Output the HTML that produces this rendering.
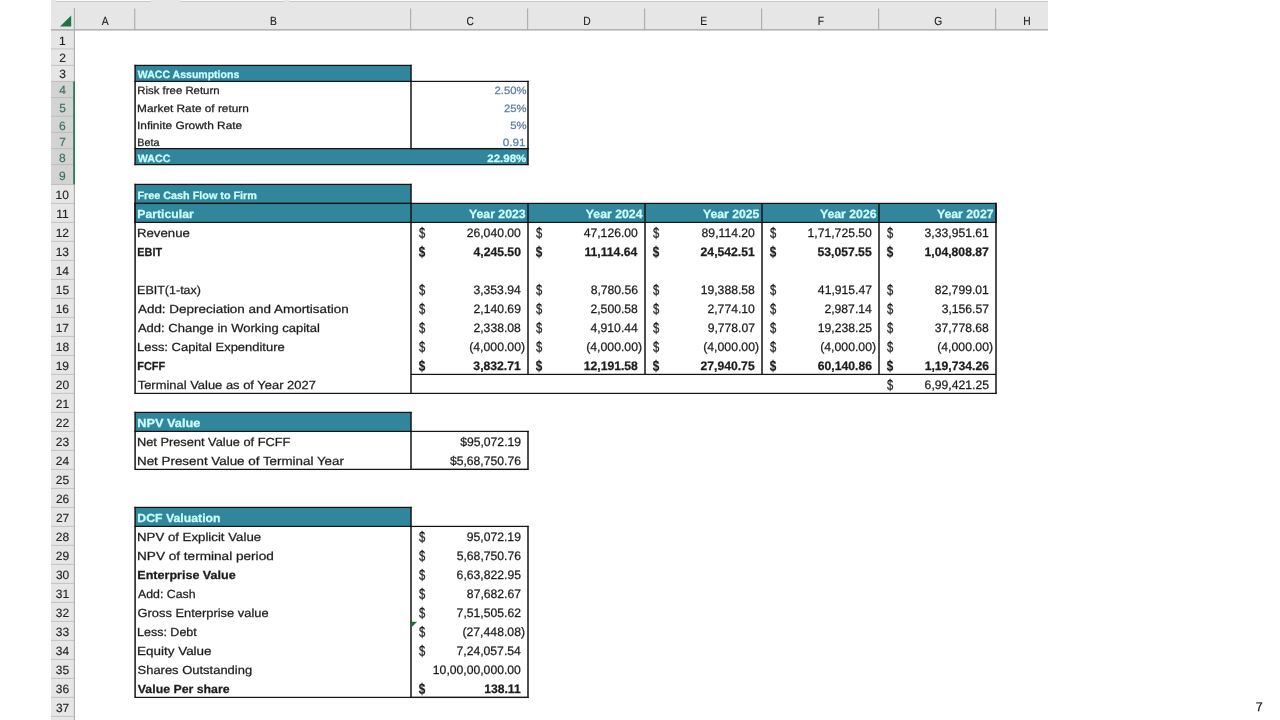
<!DOCTYPE html>
<html lang="en">
<head>
<meta charset="utf-8">
<title>DCF Valuation worksheet</title>
<style>
html,body{margin:0;padding:0;background:#fff}
body{width:1280px;height:720px;overflow:hidden;position:relative;font-family:"Liberation Sans", Arial, sans-serif;color:#1c1c1c}
#sheet{position:absolute;left:0;top:0;width:1280px;height:720px;overflow:hidden}
.r{position:absolute;display:block}
#txt{position:absolute;left:0;top:0;width:1280px;height:720px;will-change:transform}
.t{position:absolute;left:0;top:0;white-space:nowrap;line-height:16px;transform-origin:0 0;-webkit-text-stroke:0.25px currentColor;text-rendering:geometricPrecision}
.h{-webkit-text-stroke:0.15px currentColor}
</style>
</head>
<body>
<div id="sheet">
<svg class="r" style="left:0;top:0" width="1280" height="720" viewBox="0 0 1280 720" aria-hidden="true">
<rect x="51" y="0" width="997" height="30" fill="#e6e6e6"/>
<rect x="51" y="29" width="23.5" height="691" fill="#e6e6e6"/>
<rect x="55.5" y="0" width="95.5" height="1.1" fill="#fafafa"/>
<rect x="55.5" y="1.1" width="95.5" height="0.9" fill="#c4c4c4"/>
<rect x="180.5" y="0" width="103.5" height="1.1" fill="#fafafa"/>
<rect x="180.5" y="1.1" width="103.5" height="0.9" fill="#c4c4c4"/>
<rect x="289" y="0" width="759" height="1.1" fill="#fafafa"/>
<rect x="289" y="1.1" width="759" height="0.9" fill="#c4c4c4"/>
<rect x="51" y="81.4" width="23" height="103" fill="#d3d3d3"/>
<rect x="51" y="29.3" width="997" height="1.2" fill="#9f9f9f"/>
<rect x="73.85" y="8" width="1.1" height="712" fill="#adadad"/>
<rect x="51" y="48.4" width="23" height="1" fill="#c3c3c3"/>
<rect x="51" y="64.9" width="23" height="1" fill="#c3c3c3"/>
<rect x="51" y="80.9" width="22.4" height="1" fill="#bcbcbc"/>
<rect x="51" y="97.1" width="22.4" height="1" fill="#bcbcbc"/>
<rect x="51" y="115.7" width="22.4" height="1" fill="#bcbcbc"/>
<rect x="51" y="131.9" width="22.4" height="1" fill="#bcbcbc"/>
<rect x="51" y="148.1" width="22.4" height="1" fill="#bcbcbc"/>
<rect x="51" y="164.1" width="22.4" height="1" fill="#bcbcbc"/>
<rect x="51" y="183.9" width="22.4" height="1" fill="#bcbcbc"/>
<rect x="51" y="202.9" width="23" height="1" fill="#c3c3c3"/>
<rect x="51" y="221.9" width="23" height="1" fill="#c3c3c3"/>
<rect x="51" y="240.9" width="23" height="1" fill="#c3c3c3"/>
<rect x="51" y="259.9" width="23" height="1" fill="#c3c3c3"/>
<rect x="51" y="278.9" width="23" height="1" fill="#c3c3c3"/>
<rect x="51" y="297.9" width="23" height="1" fill="#c3c3c3"/>
<rect x="51" y="316.9" width="23" height="1" fill="#c3c3c3"/>
<rect x="51" y="335.9" width="23" height="1" fill="#c3c3c3"/>
<rect x="51" y="354.9" width="23" height="1" fill="#c3c3c3"/>
<rect x="51" y="373.9" width="23" height="1" fill="#c3c3c3"/>
<rect x="51" y="392.9" width="23" height="1" fill="#c3c3c3"/>
<rect x="51" y="411.9" width="23" height="1" fill="#c3c3c3"/>
<rect x="51" y="430.9" width="23" height="1" fill="#c3c3c3"/>
<rect x="51" y="449.9" width="23" height="1" fill="#c3c3c3"/>
<rect x="51" y="468.9" width="23" height="1" fill="#c3c3c3"/>
<rect x="51" y="487.9" width="23" height="1" fill="#c3c3c3"/>
<rect x="51" y="506.9" width="23" height="1" fill="#c3c3c3"/>
<rect x="51" y="525.9" width="23" height="1" fill="#c3c3c3"/>
<rect x="51" y="544.9" width="23" height="1" fill="#c3c3c3"/>
<rect x="51" y="563.9" width="23" height="1" fill="#c3c3c3"/>
<rect x="51" y="582.9" width="23" height="1" fill="#c3c3c3"/>
<rect x="51" y="601.9" width="23" height="1" fill="#c3c3c3"/>
<rect x="51" y="620.9" width="23" height="1" fill="#c3c3c3"/>
<rect x="51" y="639.9" width="23" height="1" fill="#c3c3c3"/>
<rect x="51" y="658.9" width="23" height="1" fill="#c3c3c3"/>
<rect x="51" y="677.9" width="23" height="1" fill="#c3c3c3"/>
<rect x="51" y="696.9" width="23" height="1" fill="#c3c3c3"/>
<rect x="51" y="715.9" width="23" height="1" fill="#c3c3c3"/>
<rect x="73.2" y="81.4" width="1.8" height="103" fill="#2c7a52"/>
<rect x="134.25" y="8.5" width="1" height="21" fill="#a4a4a4"/>
<rect x="410.15" y="8.5" width="1" height="21" fill="#a4a4a4"/>
<rect x="527.15" y="8.5" width="1" height="21" fill="#a4a4a4"/>
<rect x="644.15" y="8.5" width="1" height="21" fill="#a4a4a4"/>
<rect x="761.15" y="8.5" width="1" height="21" fill="#a4a4a4"/>
<rect x="878.15" y="8.5" width="1" height="21" fill="#a4a4a4"/>
<rect x="995.15" y="8.5" width="1" height="21" fill="#a4a4a4"/>
<path d="M71.2 15.6 L71.2 26.6 L60 26.6 Z" fill="#217346"/>
<rect x="135.1" y="65.4" width="275.9" height="16" fill="#31869b"/>
<rect x="135.1" y="148.6" width="392.9" height="16" fill="#31869b"/>
<rect x="135.1" y="184.4" width="275.9" height="19" fill="#31869b"/>
<rect x="135.1" y="203.4" width="860.9" height="19" fill="#31869b"/>
<rect x="135.1" y="412.4" width="275.9" height="19" fill="#31869b"/>
<rect x="135.1" y="507.4" width="275.9" height="19" fill="#31869b"/>
<rect x="134.5" y="64.775" width="277.1" height="1.25" fill="#161616"/>
<rect x="134.5" y="80.775" width="277.1" height="1.25" fill="#161616"/>
<rect x="134.35" y="64.8" width="1.5" height="17.2" fill="#161616"/>
<rect x="410.25" y="64.8" width="1.5" height="17.2" fill="#161616"/>
<rect x="134.5" y="147.975" width="394.1" height="1.25" fill="#161616"/>
<rect x="134.5" y="163.975" width="394.1" height="1.25" fill="#161616"/>
<rect x="134.35" y="148" width="1.5" height="17.2" fill="#161616"/>
<rect x="527.25" y="148" width="1.5" height="17.2" fill="#161616"/>
<rect x="410.4" y="80.775" width="118.2" height="1.25" fill="#161616"/>
<rect x="410.4" y="147.975" width="118.2" height="1.25" fill="#161616"/>
<rect x="410.25" y="80.8" width="1.5" height="68.4" fill="#161616"/>
<rect x="527.25" y="80.8" width="1.5" height="68.4" fill="#161616"/>
<rect x="134.35" y="81.4" width="1.5" height="67.2" fill="#161616"/>
<rect x="134.5" y="183.775" width="277.1" height="1.25" fill="#161616"/>
<rect x="134.5" y="202.775" width="277.1" height="1.25" fill="#161616"/>
<rect x="134.35" y="183.8" width="1.5" height="20.2" fill="#161616"/>
<rect x="410.25" y="183.8" width="1.5" height="20.2" fill="#161616"/>
<rect x="134.5" y="202.775" width="862.1" height="1.25" fill="#161616"/>
<rect x="134.5" y="221.775" width="862.1" height="1.25" fill="#161616"/>
<rect x="134.35" y="202.8" width="1.5" height="20.2" fill="#161616"/>
<rect x="995.25" y="202.8" width="1.5" height="20.2" fill="#161616"/>
<rect x="134.35" y="203.4" width="1.5" height="190.6" fill="#161616"/>
<rect x="410.25" y="203.4" width="1.5" height="190.6" fill="#161616"/>
<rect x="527.25" y="203.4" width="1.5" height="171.6" fill="#161616"/>
<rect x="644.25" y="203.4" width="1.5" height="171.6" fill="#161616"/>
<rect x="761.25" y="203.4" width="1.5" height="171.6" fill="#161616"/>
<rect x="878.25" y="203.4" width="1.5" height="171.6" fill="#161616"/>
<rect x="995.25" y="203.4" width="1.5" height="190.6" fill="#161616"/>
<rect x="411" y="373.775" width="585" height="1.25" fill="#161616"/>
<rect x="134.5" y="392.775" width="862.1" height="1.25" fill="#161616"/>
<rect x="134.5" y="411.775" width="277.1" height="1.25" fill="#161616"/>
<rect x="134.5" y="430.775" width="277.1" height="1.25" fill="#161616"/>
<rect x="134.35" y="411.8" width="1.5" height="20.2" fill="#161616"/>
<rect x="410.25" y="411.8" width="1.5" height="20.2" fill="#161616"/>
<rect x="410.4" y="430.775" width="118.2" height="1.25" fill="#161616"/>
<rect x="410.4" y="468.775" width="118.2" height="1.25" fill="#161616"/>
<rect x="410.25" y="430.8" width="1.5" height="39.2" fill="#161616"/>
<rect x="527.25" y="430.8" width="1.5" height="39.2" fill="#161616"/>
<rect x="134.35" y="431.4" width="1.5" height="38.6" fill="#161616"/>
<rect x="135.1" y="468.775" width="392.9" height="1.25" fill="#161616"/>
<rect x="134.5" y="506.775" width="277.1" height="1.25" fill="#161616"/>
<rect x="134.5" y="525.775" width="277.1" height="1.25" fill="#161616"/>
<rect x="134.35" y="506.8" width="1.5" height="20.2" fill="#161616"/>
<rect x="410.25" y="506.8" width="1.5" height="20.2" fill="#161616"/>
<rect x="410.4" y="525.775" width="118.2" height="1.25" fill="#161616"/>
<rect x="410.4" y="696.775" width="118.2" height="1.25" fill="#161616"/>
<rect x="410.25" y="525.8" width="1.5" height="172.2" fill="#161616"/>
<rect x="527.25" y="525.8" width="1.5" height="172.2" fill="#161616"/>
<rect x="134.35" y="526.4" width="1.5" height="171.6" fill="#161616"/>
<rect x="135.1" y="696.775" width="392.9" height="1.25" fill="#161616"/>
<path d="M410.5 621.7 L417.1 621.7 L410.5 628.3 Z" fill="#1f6b3c"/>
</svg>
<div id="txt">
<span class="t" style="font-size:10.6px;font-weight:700;color:#ccffff;transform:translate(137.85px,67px) scaleX(0.9942);">WACC Assumptions</span>
<span class="t" style="font-size:10.6px;transform:translate(137.29px,83px) scaleX(1.0751);">Risk free Return</span>
<span class="t" style="font-size:10.6px;transform:translate(137.10px,101px) scaleX(1.1162);">Market Rate of return</span>
<span class="t" style="font-size:10.6px;transform:translate(136.99px,118px) scaleX(1.1239);">Infinite Growth Rate</span>
<span class="t" style="font-size:10.6px;transform:translate(137.21px,135px) scaleX(1.0171);">Beta</span>
<span class="t" style="font-size:10.6px;font-weight:700;color:#ccffff;transform:translate(137.85px,151px) scaleX(1.0073);">WACC</span>
<span class="t" style="font-size:10.6px;font-weight:700;color:#ccffff;transform:translate(137.42px,188px) scaleX(1.0200);">Free Cash Flow to Firm</span>
<span class="t" style="font-size:11.7px;font-weight:700;color:#ccffff;transform:translate(137.35px,207px) scaleX(1.0456);">Particular</span>
<span class="t" style="font-size:11.7px;transform:translate(136.98px,226px) scaleX(1.1303);">Revenue</span>
<span class="t" style="font-size:11.7px;font-weight:700;transform:translate(137.36px,245px) scaleX(0.9262);">EBIT</span>
<span class="t" style="font-size:11.7px;transform:translate(137.07px,283px) scaleX(1.0698);">EBIT(1-tax)</span>
<span class="t" style="font-size:11.7px;transform:translate(137.95px,302px) scaleX(1.1504);">Add: Depreciation and Amortisation</span>
<span class="t" style="font-size:11.7px;transform:translate(137.93px,321px) scaleX(1.1125);">Add: Change in Working capital</span>
<span class="t" style="font-size:11.7px;transform:translate(136.99px,340px) scaleX(1.1089);">Less: Capital Expenditure</span>
<span class="t" style="font-size:11.7px;font-weight:700;transform:translate(137.34px,359px) scaleX(0.9329);">FCFF</span>
<span class="t" style="font-size:11.7px;transform:translate(137.66px,378px) scaleX(1.1072);">Terminal Value as of Year 2027</span>
<span class="t" style="font-size:11.7px;font-weight:700;color:#ccffff;transform:translate(137.31px,416px) scaleX(1.0895);">NPV Value</span>
<span class="t" style="font-size:11.7px;transform:translate(136.99px,435px) scaleX(1.0947);">Net Present Value of FCFF</span>
<span class="t" style="font-size:11.7px;transform:translate(136.99px,454px) scaleX(1.1444);">Net Present Value of Terminal Year</span>
<span class="t" style="font-size:11.7px;font-weight:700;color:#ccffff;transform:translate(137.35px,511px) scaleX(1.0502);">DCF Valuation</span>
<span class="t" style="font-size:11.7px;transform:translate(136.99px,530px) scaleX(1.1328);">NPV of Explicit Value</span>
<span class="t" style="font-size:11.7px;transform:translate(136.99px,549px) scaleX(1.1632);">NPV of terminal period</span>
<span class="t" style="font-size:11.7px;font-weight:700;transform:translate(137.32px,568px) scaleX(1.0736);">Enterprise Value</span>
<span class="t" style="font-size:11.7px;transform:translate(137.99px,587px) scaleX(1.0557);">Add: Cash</span>
<span class="t" style="font-size:11.7px;transform:translate(137.50px,606px) scaleX(1.1028);">Gross Enterprise value</span>
<span class="t" style="font-size:11.7px;transform:translate(137.08px,625px) scaleX(1.0677);">Less: Debt</span>
<span class="t" style="font-size:11.7px;transform:translate(136.99px,644px) scaleX(1.1519);">Equity Value</span>
<span class="t" style="font-size:11.7px;transform:translate(137.53px,663px) scaleX(1.1092);">Shares Outstanding</span>
<span class="t" style="font-size:11.7px;font-weight:700;transform:translate(137.83px,682px) scaleX(1.0533);">Value Per share</span>
<span class="t" style="font-size:10.6px;color:#5c7da3;transform:translate(494.55px,83px) scaleX(1.0636);">2.50%</span>
<span class="t" style="font-size:10.6px;color:#5c7da3;transform:translate(503.97px,101px) scaleX(1.0646);">25%</span>
<span class="t" style="font-size:10.6px;color:#5c7da3;transform:translate(510.13px,118px) scaleX(1.0711);">5%</span>
<span class="t" style="font-size:10.6px;color:#5c7da3;transform:translate(502.81px,135px) scaleX(1.1057);">0.91</span>
<span class="t" style="font-size:10.6px;font-weight:700;color:#ccffff;transform:translate(487.29px,151px) scaleX(1.0854);">22.98%</span>
<span class="t" style="font-size:12px;font-weight:700;color:#ccffff;transform:translate(468.99px,206px) scaleX(1.0222);">Year 2023</span>
<span class="t" style="font-size:12px;font-weight:700;color:#ccffff;transform:translate(585.84px,206px) scaleX(1.0221);">Year 2024</span>
<span class="t" style="font-size:12px;font-weight:700;color:#ccffff;transform:translate(702.99px,206px) scaleX(1.0177);">Year 2025</span>
<span class="t" style="font-size:12px;font-weight:700;color:#ccffff;transform:translate(819.98px,206px) scaleX(1.0218);">Year 2026</span>
<span class="t" style="font-size:12px;font-weight:700;color:#ccffff;transform:translate(936.97px,206px) scaleX(1.0222);">Year 2027</span>
<span class="t" style="font-size:15px;transform:translate(418.90px,226px) scaleX(0.7522);">$</span>
<span class="t" style="font-size:12.3px;transform:translate(466.69px,225px) scaleX(0.9900);">26,040.00</span>
<span class="t" style="font-size:15px;transform:translate(535.90px,226px) scaleX(0.7522);">$</span>
<span class="t" style="font-size:12.3px;transform:translate(583.69px,225px) scaleX(0.9900);">47,126.00</span>
<span class="t" style="font-size:15px;transform:translate(652.90px,226px) scaleX(0.7522);">$</span>
<span class="t" style="font-size:12.3px;transform:translate(701.60px,225px) scaleX(0.9900);">89,114.20</span>
<span class="t" style="font-size:15px;transform:translate(769.90px,226px) scaleX(0.7522);">$</span>
<span class="t" style="font-size:12.3px;transform:translate(807.54px,225px) scaleX(0.9900);">1,71,725.50</span>
<span class="t" style="font-size:15px;transform:translate(886.90px,226px) scaleX(0.7522);">$</span>
<span class="t" style="font-size:12.3px;transform:translate(924.55px,225px) scaleX(0.9900);">3,33,951.61</span>
<span class="t" style="font-size:15px;font-weight:700;transform:translate(418.64px,245px) scaleX(0.7804);">$</span>
<span class="t" style="font-size:12.3px;font-weight:700;transform:translate(473.51px,244px) scaleX(0.9900);">4,245.50</span>
<span class="t" style="font-size:15px;font-weight:700;transform:translate(535.64px,245px) scaleX(0.7804);">$</span>
<span class="t" style="font-size:12.3px;font-weight:700;transform:translate(584.49px,244px) scaleX(0.9900);">11,114.64</span>
<span class="t" style="font-size:15px;font-weight:700;transform:translate(652.64px,245px) scaleX(0.7804);">$</span>
<span class="t" style="font-size:12.3px;font-weight:700;transform:translate(700.59px,244px) scaleX(0.9900);">24,542.51</span>
<span class="t" style="font-size:15px;font-weight:700;transform:translate(769.64px,245px) scaleX(0.7804);">$</span>
<span class="t" style="font-size:12.3px;font-weight:700;transform:translate(817.49px,244px) scaleX(0.9900);">53,057.55</span>
<span class="t" style="font-size:15px;font-weight:700;transform:translate(886.64px,245px) scaleX(0.7804);">$</span>
<span class="t" style="font-size:12.3px;font-weight:700;transform:translate(924.52px,244px) scaleX(0.9900);">1,04,808.87</span>
<span class="t" style="font-size:15px;transform:translate(418.90px,283px) scaleX(0.7522);">$</span>
<span class="t" style="font-size:12.3px;transform:translate(473.42px,282px) scaleX(0.9900);">3,353.94</span>
<span class="t" style="font-size:15px;transform:translate(535.90px,283px) scaleX(0.7522);">$</span>
<span class="t" style="font-size:12.3px;transform:translate(590.63px,282px) scaleX(0.9900);">8,780.56</span>
<span class="t" style="font-size:15px;transform:translate(652.90px,283px) scaleX(0.7522);">$</span>
<span class="t" style="font-size:12.3px;transform:translate(700.70px,282px) scaleX(0.9900);">19,388.58</span>
<span class="t" style="font-size:15px;transform:translate(769.90px,283px) scaleX(0.7522);">$</span>
<span class="t" style="font-size:12.3px;transform:translate(817.86px,282px) scaleX(0.9900);">41,915.47</span>
<span class="t" style="font-size:15px;transform:translate(886.90px,283px) scaleX(0.7522);">$</span>
<span class="t" style="font-size:12.3px;transform:translate(934.70px,282px) scaleX(0.9900);">82,799.01</span>
<span class="t" style="font-size:15px;transform:translate(418.90px,302px) scaleX(0.7522);">$</span>
<span class="t" style="font-size:12.3px;transform:translate(473.51px,301px) scaleX(0.9900);">2,140.69</span>
<span class="t" style="font-size:15px;transform:translate(535.90px,302px) scaleX(0.7522);">$</span>
<span class="t" style="font-size:12.3px;transform:translate(590.47px,301px) scaleX(0.9900);">2,500.58</span>
<span class="t" style="font-size:15px;transform:translate(652.90px,302px) scaleX(0.7522);">$</span>
<span class="t" style="font-size:12.3px;transform:translate(707.46px,301px) scaleX(0.9900);">2,774.10</span>
<span class="t" style="font-size:15px;transform:translate(769.90px,302px) scaleX(0.7522);">$</span>
<span class="t" style="font-size:12.3px;transform:translate(824.42px,301px) scaleX(0.9900);">2,987.14</span>
<span class="t" style="font-size:15px;transform:translate(886.90px,302px) scaleX(0.7522);">$</span>
<span class="t" style="font-size:12.3px;transform:translate(941.64px,301px) scaleX(0.9900);">3,156.57</span>
<span class="t" style="font-size:15px;transform:translate(418.90px,321px) scaleX(0.7522);">$</span>
<span class="t" style="font-size:12.3px;transform:translate(473.47px,320px) scaleX(0.9900);">2,338.08</span>
<span class="t" style="font-size:15px;transform:translate(535.90px,321px) scaleX(0.7522);">$</span>
<span class="t" style="font-size:12.3px;transform:translate(590.42px,320px) scaleX(0.9900);">4,910.44</span>
<span class="t" style="font-size:15px;transform:translate(652.90px,321px) scaleX(0.7522);">$</span>
<span class="t" style="font-size:12.3px;transform:translate(707.64px,320px) scaleX(0.9900);">9,778.07</span>
<span class="t" style="font-size:15px;transform:translate(769.90px,321px) scaleX(0.7522);">$</span>
<span class="t" style="font-size:12.3px;transform:translate(817.77px,320px) scaleX(0.9900);">19,238.25</span>
<span class="t" style="font-size:15px;transform:translate(886.90px,321px) scaleX(0.7522);">$</span>
<span class="t" style="font-size:12.3px;transform:translate(934.70px,320px) scaleX(0.9900);">37,778.68</span>
<span class="t" style="font-size:15px;transform:translate(418.90px,340px) scaleX(0.7522);">$</span>
<span class="t" style="font-size:12.3px;transform:translate(469.24px,339px) scaleX(0.9950);">(4,000.00)</span>
<span class="t" style="font-size:15px;transform:translate(535.90px,340px) scaleX(0.7522);">$</span>
<span class="t" style="font-size:12.3px;transform:translate(586.24px,339px) scaleX(0.9950);">(4,000.00)</span>
<span class="t" style="font-size:15px;transform:translate(652.90px,340px) scaleX(0.7522);">$</span>
<span class="t" style="font-size:12.3px;transform:translate(703.24px,339px) scaleX(0.9950);">(4,000.00)</span>
<span class="t" style="font-size:15px;transform:translate(769.90px,340px) scaleX(0.7522);">$</span>
<span class="t" style="font-size:12.3px;transform:translate(820.24px,339px) scaleX(0.9950);">(4,000.00)</span>
<span class="t" style="font-size:15px;transform:translate(886.90px,340px) scaleX(0.7522);">$</span>
<span class="t" style="font-size:12.3px;transform:translate(937.24px,339px) scaleX(0.9950);">(4,000.00)</span>
<span class="t" style="font-size:15px;font-weight:700;transform:translate(418.64px,359px) scaleX(0.7804);">$</span>
<span class="t" style="font-size:12.3px;font-weight:700;transform:translate(473.36px,358px) scaleX(0.9900);">3,832.71</span>
<span class="t" style="font-size:15px;font-weight:700;transform:translate(535.64px,359px) scaleX(0.7804);">$</span>
<span class="t" style="font-size:12.3px;font-weight:700;transform:translate(583.73px,358px) scaleX(0.9900);">12,191.58</span>
<span class="t" style="font-size:15px;font-weight:700;transform:translate(652.64px,359px) scaleX(0.7804);">$</span>
<span class="t" style="font-size:12.3px;font-weight:700;transform:translate(700.49px,358px) scaleX(0.9900);">27,940.75</span>
<span class="t" style="font-size:15px;font-weight:700;transform:translate(769.64px,359px) scaleX(0.7804);">$</span>
<span class="t" style="font-size:12.3px;font-weight:700;transform:translate(817.81px,358px) scaleX(0.9900);">60,140.86</span>
<span class="t" style="font-size:15px;font-weight:700;transform:translate(886.64px,359px) scaleX(0.7804);">$</span>
<span class="t" style="font-size:12.3px;font-weight:700;transform:translate(924.66px,358px) scaleX(0.9900);">1,19,734.26</span>
<span class="t" style="font-size:15px;transform:translate(886.90px,378px) scaleX(0.7522);">$</span>
<span class="t" style="font-size:12.3px;transform:translate(924.61px,377px) scaleX(0.9900);">6,99,421.25</span>
<span class="t" style="font-size:12.3px;transform:translate(460.13px,434px) scaleX(0.9900);">$95,072.19</span>
<span class="t" style="font-size:12.3px;transform:translate(449.90px,453px) scaleX(0.9900);">$5,68,750.76</span>
<span class="t" style="font-size:15px;transform:translate(418.90px,530px) scaleX(0.7522);">$</span>
<span class="t" style="font-size:12.3px;transform:translate(466.74px,529px) scaleX(0.9900);">95,072.19</span>
<span class="t" style="font-size:15px;transform:translate(418.90px,549px) scaleX(0.7522);">$</span>
<span class="t" style="font-size:12.3px;transform:translate(456.70px,548px) scaleX(0.9900);">5,68,750.76</span>
<span class="t" style="font-size:15px;transform:translate(418.90px,568px) scaleX(0.7522);">$</span>
<span class="t" style="font-size:12.3px;transform:translate(456.61px,567px) scaleX(0.9900);">6,63,822.95</span>
<span class="t" style="font-size:15px;transform:translate(418.90px,587px) scaleX(0.7522);">$</span>
<span class="t" style="font-size:12.3px;transform:translate(466.86px,586px) scaleX(0.9900);">87,682.67</span>
<span class="t" style="font-size:15px;transform:translate(418.90px,606px) scaleX(0.7522);">$</span>
<span class="t" style="font-size:12.3px;transform:translate(456.61px,605px) scaleX(0.9900);">7,51,505.62</span>
<span class="t" style="font-size:15px;transform:translate(418.90px,625px) scaleX(0.7522);">$</span>
<span class="t" style="font-size:12.3px;transform:translate(462.44px,624px) scaleX(0.9950);">(27,448.08)</span>
<span class="t" style="font-size:15px;transform:translate(418.90px,644px) scaleX(0.7522);">$</span>
<span class="t" style="font-size:12.3px;transform:translate(456.50px,643px) scaleX(0.9900);">7,24,057.54</span>
<span class="t" style="font-size:12.3px;transform:translate(432.85px,662px) scaleX(0.9900);">10,00,00,000.00</span>
<span class="t" style="font-size:15px;font-weight:700;transform:translate(418.64px,682px) scaleX(0.7804);">$</span>
<span class="t" style="font-size:12.3px;font-weight:700;transform:translate(484.18px,681px) scaleX(0.9900);">138.11</span>
<span class="t h" style="font-size:11.8px;color:#1e1e1e;transform:translate(101.78px,13px) scaleX(0.8700);">A</span>
<span class="t h" style="font-size:11.8px;color:#1e1e1e;transform:translate(270.10px,13px) scaleX(0.8700);">B</span>
<span class="t h" style="font-size:11.8px;color:#1e1e1e;transform:translate(466.41px,13px) scaleX(0.8700);">C</span>
<span class="t h" style="font-size:11.8px;color:#1e1e1e;transform:translate(583.20px,13px) scaleX(0.8700);">D</span>
<span class="t h" style="font-size:11.8px;color:#1e1e1e;transform:translate(700.36px,13px) scaleX(0.8700);">E</span>
<span class="t h" style="font-size:11.8px;color:#1e1e1e;transform:translate(817.66px,13px) scaleX(0.8700);">F</span>
<span class="t h" style="font-size:11.8px;color:#1e1e1e;transform:translate(934.14px,13px) scaleX(0.8700);">G</span>
<span class="t h" style="font-size:11.8px;color:#1e1e1e;transform:translate(1023.35px,13px) scaleX(0.8700);">H</span>
<span class="t h" style="font-size:12px;color:#262626;transform:translate(58.97px,33px);">1</span>
<span class="t h" style="font-size:12px;color:#262626;transform:translate(59.19px,50px);">2</span>
<span class="t h" style="font-size:12px;color:#262626;transform:translate(59.18px,66px);">3</span>
<span class="t h" style="font-size:12px;color:#3a7154;transform:translate(59.30px,82px);">4</span>
<span class="t h" style="font-size:12px;color:#3a7154;transform:translate(59.13px,100px);">5</span>
<span class="t h" style="font-size:12px;color:#3a7154;transform:translate(59.12px,118px);">6</span>
<span class="t h" style="font-size:12px;color:#3a7154;transform:translate(59.26px,134px);">7</span>
<span class="t h" style="font-size:12px;color:#3a7154;transform:translate(59.09px,150px);">8</span>
<span class="t h" style="font-size:12px;color:#3a7154;transform:translate(59.10px,168px);">9</span>
<span class="t h" style="font-size:12px;color:#262626;transform:translate(55.62px,187px);">10</span>
<span class="t h" style="font-size:12px;color:#262626;transform:translate(56.21px,206px);">11</span>
<span class="t h" style="font-size:12px;color:#262626;transform:translate(55.67px,225px);">12</span>
<span class="t h" style="font-size:12px;color:#262626;transform:translate(55.68px,244px);">13</span>
<span class="t h" style="font-size:12px;color:#262626;transform:translate(55.63px,263px);">14</span>
<span class="t h" style="font-size:12px;color:#262626;transform:translate(55.71px,282px);">15</span>
<span class="t h" style="font-size:12px;color:#262626;transform:translate(55.65px,301px);">16</span>
<span class="t h" style="font-size:12px;color:#262626;transform:translate(55.64px,320px);">17</span>
<span class="t h" style="font-size:12px;color:#262626;transform:translate(55.71px,339px);">18</span>
<span class="t h" style="font-size:12px;color:#262626;transform:translate(55.69px,358px);">19</span>
<span class="t h" style="font-size:12px;color:#262626;transform:translate(55.72px,377px);">20</span>
<span class="t h" style="font-size:12px;color:#262626;transform:translate(55.71px,396px);">21</span>
<span class="t h" style="font-size:12px;color:#262626;transform:translate(55.76px,415px);">22</span>
<span class="t h" style="font-size:12px;color:#262626;transform:translate(55.78px,434px);">23</span>
<span class="t h" style="font-size:12px;color:#262626;transform:translate(55.80px,453px);">24</span>
<span class="t h" style="font-size:12px;color:#262626;transform:translate(55.82px,472px);">25</span>
<span class="t h" style="font-size:12px;color:#262626;transform:translate(55.88px,491px);">26</span>
<span class="t h" style="font-size:12px;color:#262626;transform:translate(55.88px,510px);">27</span>
<span class="t h" style="font-size:12px;color:#262626;transform:translate(55.82px,529px);">28</span>
<span class="t h" style="font-size:12px;color:#262626;transform:translate(55.80px,548px);">29</span>
<span class="t h" style="font-size:12px;color:#262626;transform:translate(55.88px,567px);">30</span>
<span class="t h" style="font-size:12px;color:#262626;transform:translate(55.87px,586px);">31</span>
<span class="t h" style="font-size:12px;color:#262626;transform:translate(55.81px,605px);">32</span>
<span class="t h" style="font-size:12px;color:#262626;transform:translate(55.84px,624px);">33</span>
<span class="t h" style="font-size:12px;color:#262626;transform:translate(55.86px,643px);">34</span>
<span class="t h" style="font-size:12px;color:#262626;transform:translate(55.87px,662px);">35</span>
<span class="t h" style="font-size:12px;color:#262626;transform:translate(55.82px,681px);">36</span>
<span class="t h" style="font-size:12px;color:#262626;transform:translate(55.95px,700px);">37</span>
<span class="t" style="font-size:12.5px;color:#181818;transform:translate(1255.70px,699px);">7</span>
</div>
</div>
</body>
</html>
